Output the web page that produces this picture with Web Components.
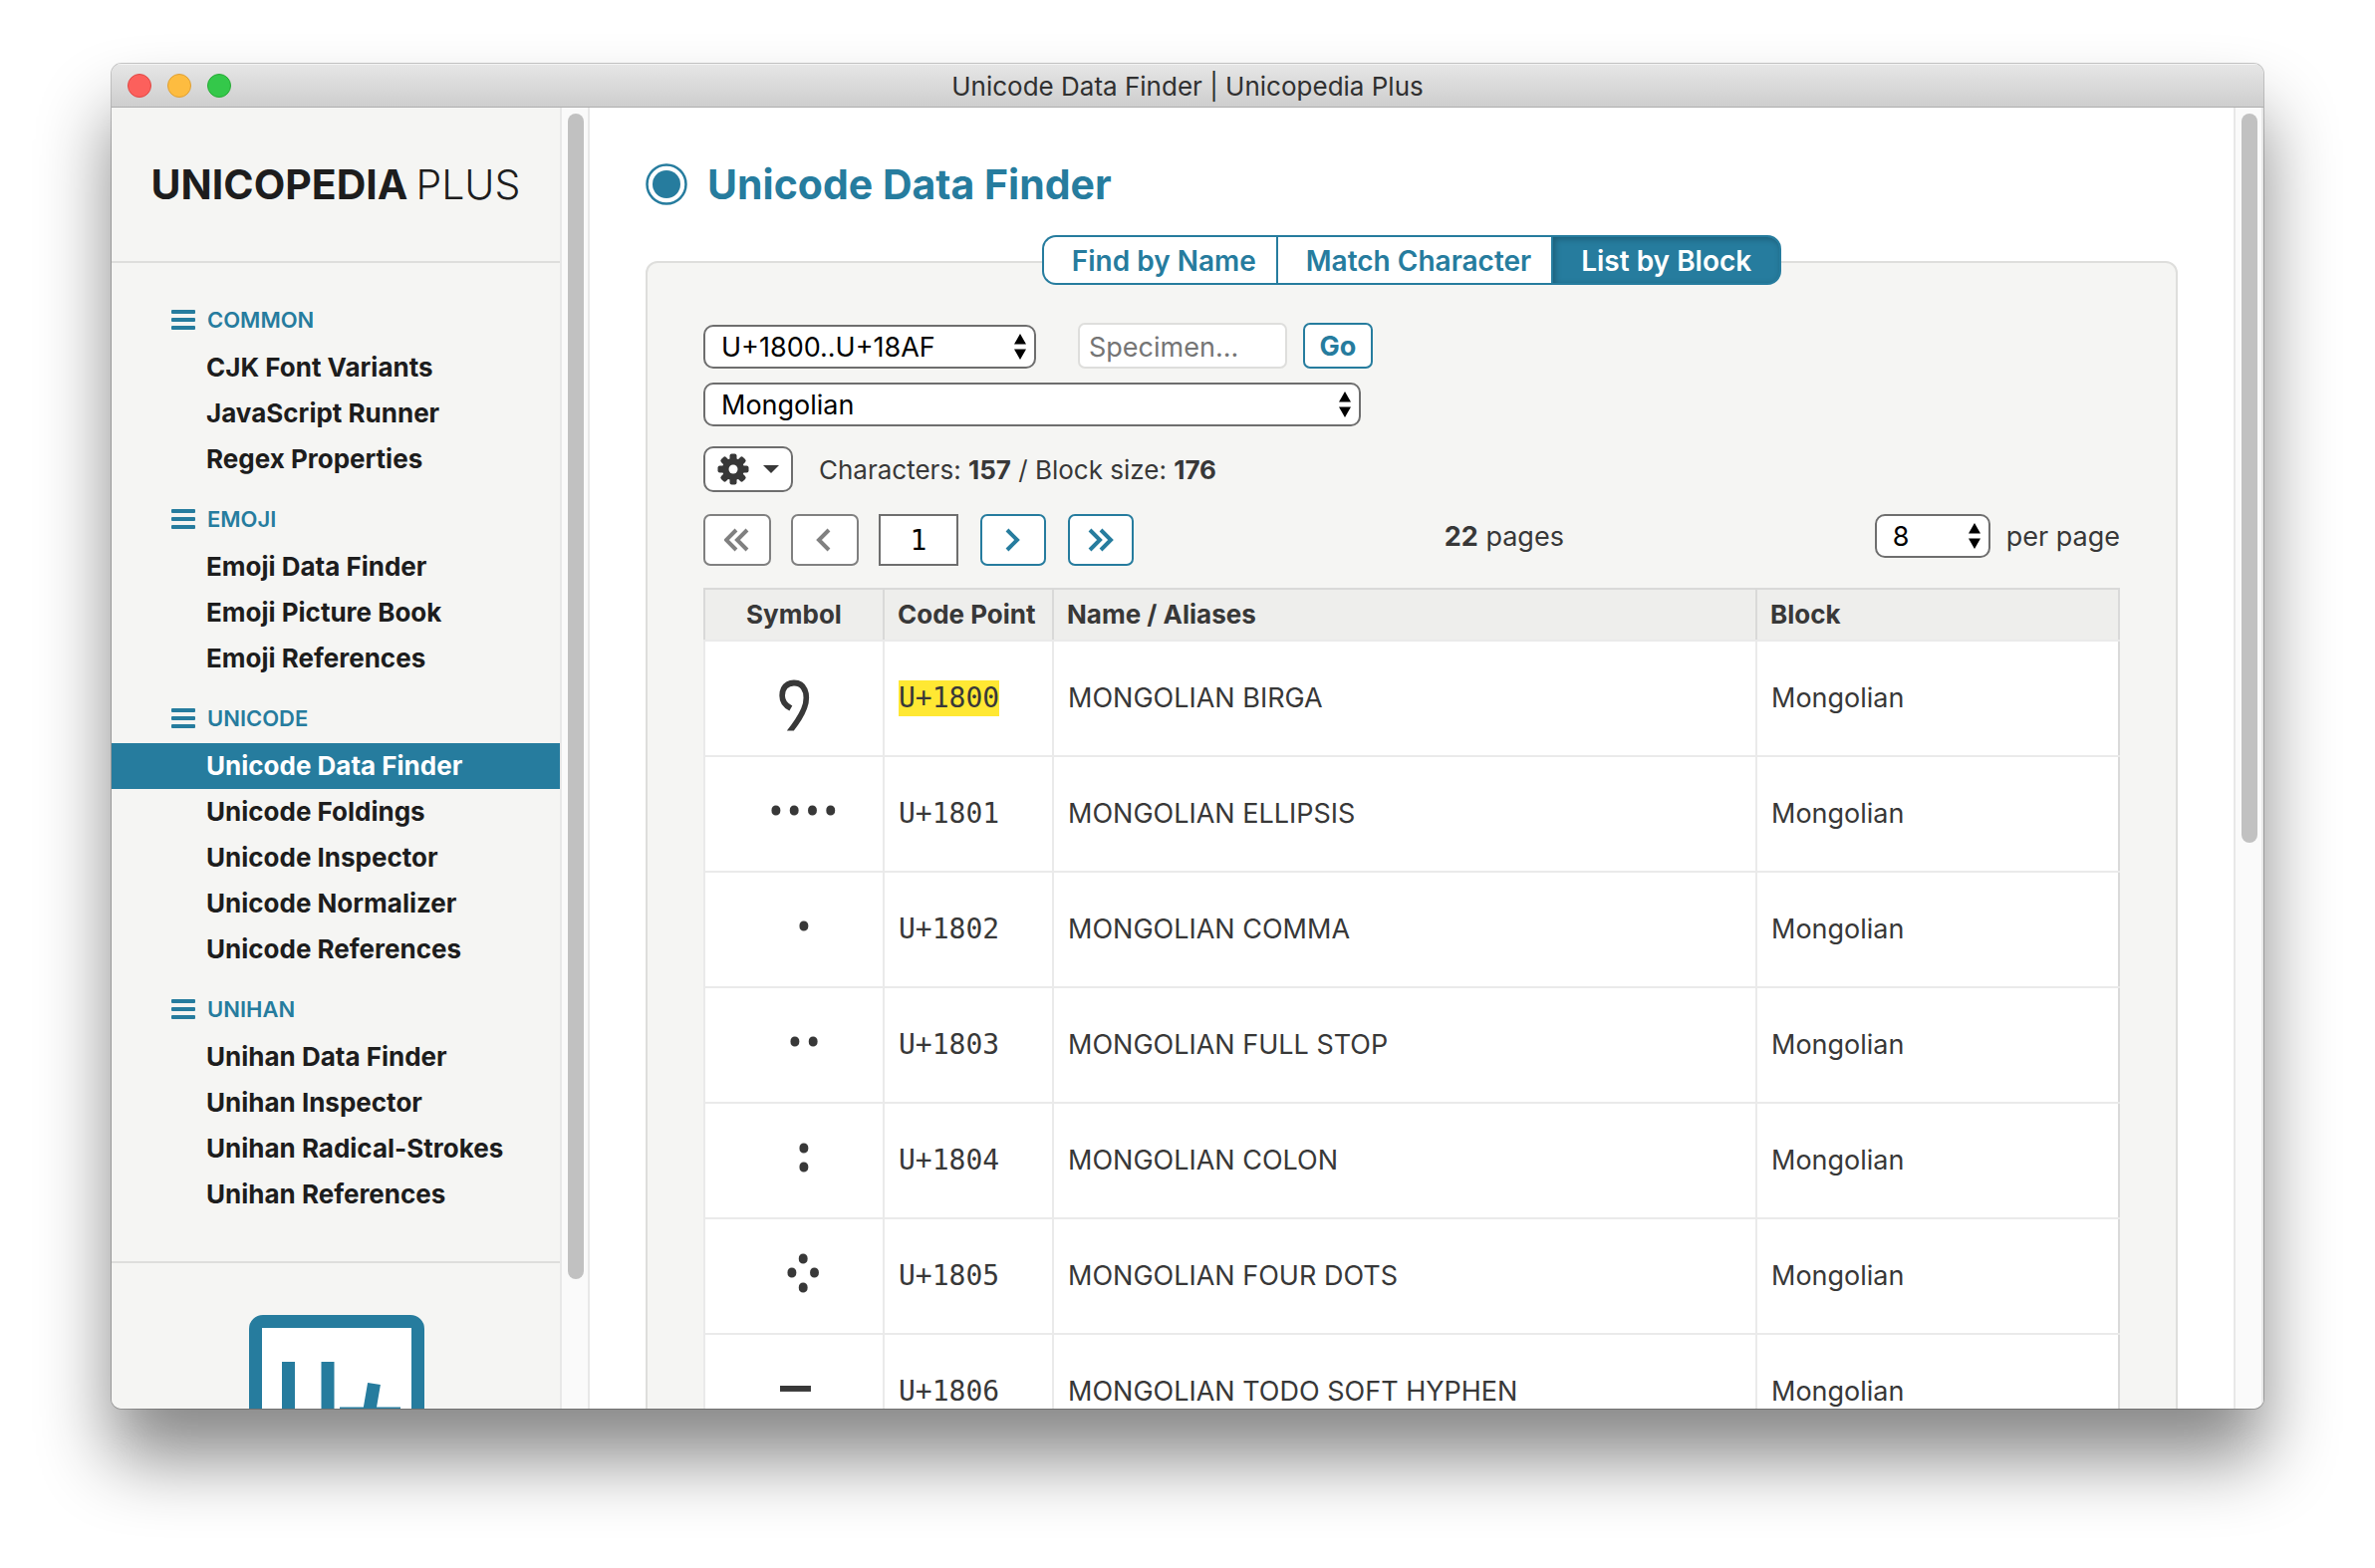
<!DOCTYPE html>
<html lang="en">
<head>
<meta charset="utf-8">
<title>Unicode Data Finder | Unicopedia Plus</title>
<style>
  :root {
    --accent: #267c9e;
    --ink: #383838;
    --panel: #f5f5f3;
    --rule: #dededc;
    --ui: Inter, "Liberation Sans", sans-serif;
    --mono: "DejaVu Sans Mono", "Liberation Mono", monospace;
  }
  html, body { margin: 0; height: 100%; }
  body {
    box-sizing: border-box;
    display: flex;
    padding: 64px 112px 160px;
    overflow: hidden;
    background: #fff;
    color: var(--ink);
    font-family: var(--ui);
    font-size: 26px;
  }
</style>
</head>
<body>
<app-window caption="Unicode Data Finder | Unicopedia Plus">
  <side-bar slot="side">
    <nav-group name="COMMON">
      <nav-item>CJK Font Variants</nav-item>
      <nav-item>JavaScript Runner</nav-item>
      <nav-item>Regex Properties</nav-item>
    </nav-group>
    <nav-group name="EMOJI">
      <nav-item>Emoji Data Finder</nav-item>
      <nav-item>Emoji Picture Book</nav-item>
      <nav-item>Emoji References</nav-item>
    </nav-group>
    <nav-group name="UNICODE">
      <nav-item current>Unicode Data Finder</nav-item>
      <nav-item>Unicode Foldings</nav-item>
      <nav-item>Unicode Inspector</nav-item>
      <nav-item>Unicode Normalizer</nav-item>
      <nav-item>Unicode References</nav-item>
    </nav-group>
    <nav-group name="UNIHAN">
      <nav-item>Unihan Data Finder</nav-item>
      <nav-item>Unihan Inspector</nav-item>
      <nav-item>Unihan Radical-Strokes</nav-item>
      <nav-item>Unihan References</nav-item>
    </nav-group>
  </side-bar>
  <scroll-track slot="side-scroll" style="--thumb: 90.4%"></scroll-track>
  <data-finder></data-finder>
  <scroll-track slot="main-scroll" style="--thumb: 56.6%"></scroll-track>
</app-window>

<script>
const define = (name, html, setup) => {
  const template = document.createElement('template');
  template.innerHTML = html;
  customElements.define(name, class extends HTMLElement {
    constructor() {
      super();
      this.attachShadow({ mode: 'open' }).append(template.content.cloneNode(true));
    }
    connectedCallback() {
      if (setup) setup(this, this.shadowRoot);
    }
  });
};

/* Window frame with title bar, sidebar, content and scroll tracks */
define('app-window', `
  <style>
    :host { flex: 1; min-width: 0; display: flex; flex-direction: column; overflow: hidden;
      background: #fff; border-radius: 10px;
      box-shadow: 0 0 0 1px rgba(0,0,0,.22), 0 50px 72px rgba(0,0,0,.47); }
    header { flex: none; box-sizing: border-box; height: 44px; display: grid;
      grid-template-columns: 1fr auto 1fr; align-items: center; padding: 0 16px;
      background: linear-gradient(#e6e6e6, #cecece); border-bottom: 1px solid #aeaeae;
      box-shadow: inset 0 1px #f3f3f3; }
    .lights { display: flex; gap: 16px; }
    .lights button { width: 24px; height: 24px; padding: 0; border-radius: 50%; border: 1px solid; }
    .close { background: #fc605c; border-color: #df4744 !important; }
    .mini { background: #fdbc40; border-color: #de9f34 !important; }
    .zoom { background: #34c84a; border-color: #27aa35 !important; }
    .caption { padding-top: 2px; font-size: 26px; line-height: 32px; color: #303030; }
    .body { flex: 1; min-height: 0; display: flex; }
    .main { flex: 1; min-width: 0; overflow: hidden; }
  </style>
  <header>
    <div class="lights">
      <button class="close" aria-label="Close"></button>
      <button class="mini" aria-label="Minimize"></button>
      <button class="zoom" aria-label="Zoom"></button>
    </div>
    <div class="caption"></div>
  </header>
  <div class="body">
    <slot name="side"></slot>
    <slot name="side-scroll"></slot>
    <div class="main"><slot></slot></div>
    <slot name="main-scroll"></slot>
  </div>`,
  (el, root) => { root.querySelector('.caption').textContent = el.getAttribute('caption'); });

define('scroll-track', `
  <style>
    :host { flex: none; box-sizing: border-box; width: 30px; padding: 6px 4px 6px 6px;
      background: #fafafa; border: solid #e8e8e8; border-width: 0 2px; }
    div { width: 16px; height: var(--thumb); border-radius: 8px; background: #c1c1c1; }
  </style>
  <div></div>`);

define('side-bar', `
  <style>
    :host { flex: none; display: block; width: 450px; overflow: hidden; background: var(--panel); color: #1d1d1d; }
    .brand { display: flex; justify-content: center; align-items: baseline; gap: 8px; padding: 53px 0;
      border-bottom: 2px solid var(--rule); font-size: 41px; line-height: 48px; }
    .brand b { font-weight: 700; }
    .brand span { font-weight: 300; }
    nav { padding: 20px 0 44px; border-bottom: 2px solid var(--rule); }
    .logo { display: flex; justify-content: center; padding: 52px 0 52px 2px; }
  </style>
  <div class="brand"><b>UNICOPEDIA</b><span>PLUS</span></div>
  <nav><slot></slot></nav>
  <div class="logo">
    <svg width="176" height="176" viewBox="0 0 176 176" fill="none" stroke="#267c9e" stroke-width="13">
      <rect x="6.5" y="6.5" width="163" height="163" rx="7" fill="#fff" stroke="none"/>
      <path fill="#267c9e" stroke="none" fill-rule="evenodd" d="M14 0H162a14 14 0 0 1 14 14V162a14 14 0 0 1-14 14H14a14 14 0 0 1-14-14V14A14 14 0 0 1 14 0ZM13 13V163H163V13Z"/>
      <path d="M39.500 47V110a19.500 19.500 0 0 0 39.500 0V47"/>
      <path d="M125.500 69L115 130M91 99H152"/>
    </svg>
  </div>`);

define('nav-group', `
  <style>
    :host { display: block; }
    h2 { display: flex; align-items: center; gap: 12px; margin: 0; padding: 22px 0 10px 60px;
      color: var(--accent); font-size: 22px; line-height: 30px; font-weight: 600; }
  </style>
  <h2>
    <svg width="24" height="20" fill="#267c9e"><rect width="24" height="4" rx="1"/><rect y="8" width="24" height="4" rx="1"/><rect y="16" width="24" height="4" rx="1"/></svg>
    <span></span>
  </h2>
  <slot></slot>`,
  (el, root) => { root.querySelector('span').textContent = el.getAttribute('name'); });

define('nav-item', `
  <style>
    :host { display: block; }
    a { display: block; padding-left: 95px; color: inherit; text-decoration: none;
      font-size: 26px; line-height: 46px; font-weight: 700; }
    :host([current]) a { background: var(--accent); color: #fff; }
  </style>
  <a href="#"><slot></slot></a>`);

/* Segmented tab control */
define('tab-strip', `
  <style>
    :host { display: flex; }
    button { box-sizing: border-box; height: 50px; margin: 0; padding: 2px 20px 0 28px; cursor: pointer;
      border: solid var(--accent); border-width: 2px 0 2px 2px; background: #fff; color: var(--accent);
      font: 600 28px/44px var(--ui); }
    button:first-of-type { border-radius: 14px 0 0 14px; }
    button:last-of-type { padding-right: 28px; border-right-width: 2px; border-radius: 0 14px 14px 0; }
    button[aria-selected=true] { background: var(--accent); color: #fff; box-shadow: inset 2px 2px 6px rgba(0,0,0,.25); }
  </style>
  <button role="tab" aria-selected="false">Find by Name</button><button role="tab" aria-selected="false">Match Character</button><button role="tab" aria-selected="true">List by Block</button>`);

/* Drop-down with paired up/down arrows */
define('pop-up', `
  <style>
    :host { display: grid; align-items: center; }
    select, svg { grid-area: 1 / 1; }
    select { appearance: none; box-sizing: border-box; width: 100%; height: 44px; margin: 0; padding: 2px 30px 0 16px;
      border: 2px solid #6e6e6e; border-radius: 10px; background: #fff; color: #000;
      font: 400 27px/36px var(--ui); }
    svg { justify-self: end; margin-right: 10px; pointer-events: none; }
  </style>
  <select><option></option></select>
  <svg width="12" height="26"><path d="M6 0l6 10.500H0zM6 26l6-10.500H0z"/></svg>`,
  (el, root) => {
    root.querySelector('option').textContent = el.getAttribute('value');
    root.querySelector('select').setAttribute('aria-label', el.getAttribute('label'));
  });

/* Pager button drawing one or two chevrons in either direction */
define('page-button', `
  <style>
    :host { display: block; }
    button { box-sizing: border-box; display: flex; align-items: center; justify-content: center;
      width: 66px; height: 52px; margin-left: 2px; padding: 0; border: 2px solid var(--accent); border-radius: 7px;
      background: #fff; color: var(--accent); }
    button:disabled { width: 68px; margin-left: 0; border-color: #808080; color: #808080; }
  </style>
  <button><svg width="26" height="24" fill="none" stroke="currentColor" stroke-width="4"><path/></svg></button>`,
  (el, root) => {
    const kind = el.getAttribute('kind');
    const shapes = {
      first: 'M12 2L2 12l10 10M23 2L13 12l10 10',
      prev: 'M17 2L7 12l10 10',
      next: 'M7 2l10 10L7 22',
      last: 'M2 2l10 10L2 22M13 2l10 10L13 22'
    };
    root.querySelector('path').setAttribute('d', shapes[kind]);
    const button = root.querySelector('button');
    button.setAttribute('aria-label', kind + ' page');
    button.disabled = el.hasAttribute('disabled');
  });

define('block-table', `
  <style>
    :host { display: block; }
    table { width: 100%; table-layout: fixed; border-collapse: collapse; background: #fff;
      border-right: 2px solid #d9d9d9; }
    col.symbol { width: 180px; } col.code { width: 170px; } col.block { width: 364px; }
    th { box-sizing: border-box; height: 52px; padding: 0 13px; border: 2px solid #d9d9d8; border-bottom-color: #eaeaea;
      background: #eeeeec; font-size: 26px; line-height: 32px; font-weight: 700; text-align: left; }
    td { box-sizing: border-box; height: 116px; padding: 0 14px; border: 2px solid #eaeaea; font-size: 27px; line-height: 32px; }
    th:last-child, td:last-child { border-right-color: #d9d9d9; }
    th:first-child, td:first-child { padding: 0; text-align: center; }
    td.sym { font-size: 72px; line-height: 32px; }
    code, mark { font: 400 28px/32px var(--mono); color: inherit; }
    mark { display: inline-block; padding: 2px 0; background: #ffe833; }
  </style>
  <table>
    <colgroup><col class="symbol"><col class="code"><col><col class="block"></colgroup>
    <thead><tr><th>Symbol</th><th>Code Point</th><th>Name / Aliases</th><th>Block</th></tr></thead>
    <tbody></tbody>
  </table>`,
  (el, root) => {
    const names = ['BIRGA', 'ELLIPSIS', 'COMMA', 'FULL STOP', 'COLON', 'FOUR DOTS', 'TODO SOFT HYPHEN'];
    root.querySelector('tbody').innerHTML = names.map((name, i) => {
      const tag = i ? 'code' : 'mark';
      return `<tr><td class="sym">&#${0x1800 + i};</td><td><${tag}>U+180${i}</${tag}></td><td>MONGOLIAN ${name}</td><td>Mongolian</td></tr>`;
    }).join('');
  });

define('data-finder', `
  <style>
    :host { display: flex; flex-direction: column; padding: 0 56px; }
    h1 { display: flex; align-items: center; gap: 20px; margin: 0; padding: 49px 0 23px;
      color: var(--accent); font-size: 41px; line-height: 56px; font-weight: 700; }
    tab-strip { align-self: center; z-index: 1; margin-bottom: -24px; }
    section { display: flex; flex-direction: column; padding: 60px 56px; border: 2px solid var(--rule);
      border-radius: 12px; background: var(--panel); }
    .row { display: flex; align-items: flex-end; }
    .range { width: 334px; margin-right: 42px; }
    input { box-sizing: border-box; margin: 0; background: #fff; color: #000; outline: 0; }
    .specimen { width: 210px; height: 46px; margin-right: 16px; padding: 2px 9px 0; border: 2px solid var(--rule);
      border-radius: 7px; font: 400 27px/36px var(--ui); }
    .specimen::placeholder { color: #757575; opacity: 1; }
    .go { box-sizing: border-box; width: 70px; height: 46px; padding: 2px 0 0; border: 2px solid var(--accent);
      border-radius: 7px; background: #fff; color: var(--accent); font: 700 27px/36px var(--ui); }
    .name { width: 660px; margin-top: 14px; }
    .info { align-items: center; gap: 26px; margin-top: 20px; font-size: 26px; line-height: 32px; }
    .info span { padding-top: 2px; }
    .gear { box-sizing: border-box; display: flex; align-items: center; gap: 14px; width: 90px; height: 46px;
      padding: 0 12px; border: 2px solid #6e6e6e; border-radius: 10px; background: #fff; }
    .pager { align-items: flex-start; justify-content: space-between; margin: 22px 0; font-size: 27px; line-height: 46px; }
    .pages, .per { display: flex; align-items: flex-start; }
    .pages { gap: 20px; }
    .pages input { width: 80px; height: 52px; padding: 0; border: 2px solid #6e6e6e; text-align: center;
      font: 400 28px/36px var(--mono); }
    .per { gap: 16px; }
    .per pop-up { width: 116px; }
  </style>
  <h1>
    <svg width="42" height="42" fill="none" stroke="#267c9e" stroke-width="2.500"><circle cx="21" cy="21" r="19.500"/><circle cx="21" cy="21" r="14" fill="#267c9e" stroke="none"/></svg>
    Unicode Data Finder
  </h1>
  <tab-strip role="tablist"></tab-strip>
  <section>
    <div class="row">
      <pop-up class="range" value="U+1800..U+18AF" label="Block range"></pop-up>
      <input class="specimen" aria-label="Specimen" placeholder="Specimen...">
      <button class="go">Go</button>
    </div>
    <pop-up class="name" value="Mongolian" label="Block name"></pop-up>
    <div class="row info">
      <button class="gear" aria-label="Settings">
        <svg width="32" height="32" viewBox="-16 -16 32 32" fill="#383838">
          <rect x="-3.500" y="-15.500" width="7" height="31" rx="2"/><rect x="-3.500" y="-15.500" width="7" height="31" rx="2" transform="rotate(45)"/>
          <rect x="-3.500" y="-15.500" width="7" height="31" rx="2" transform="rotate(90)"/><rect x="-3.500" y="-15.500" width="7" height="31" rx="2" transform="rotate(135)"/>
          <circle r="11"/><circle r="4.500" fill="#fff"/>
        </svg>
        <svg width="16" height="8" fill="#383838"><path d="M0 0h16l-8 8z"/></svg>
      </button>
      <span>Characters: <b>157</b> / Block size: <b>176</b></span>
    </div>
    <div class="row pager">
      <div class="pages">
        <page-button kind="first" disabled></page-button>
        <page-button kind="prev" disabled></page-button>
        <input aria-label="Page" value="1">
        <page-button kind="next"></page-button>
        <page-button kind="last"></page-button>
      </div>
      <span><b>22</b> pages</span>
      <div class="per"><pop-up value="8" label="Rows per page"></pop-up><span>per page</span></div>
    </div>
    <block-table></block-table>
  </section>`);
</script>
</body>
</html>
